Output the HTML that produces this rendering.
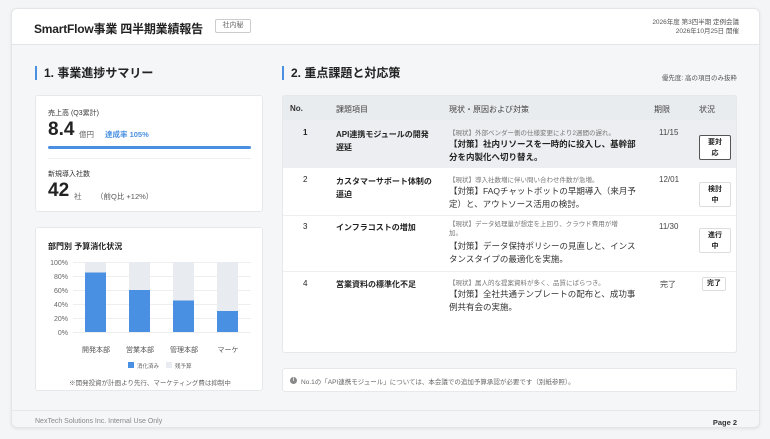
<!DOCTYPE html>
<html><head><meta charset="utf-8"><style>
*{box-sizing:border-box;margin:0;padding:0}
body{width:770px;height:439px;background:#f4f5f7;font-family:"Liberation Sans","Noto Sans CJK JP",sans-serif;color:#222;position:relative;overflow:hidden}
.abs{position:absolute}
.frame{left:11px;top:8px;width:749px;height:420px;background:#f5f6f8;border:1px solid #e3e5e8;border-radius:6px;box-shadow:0 1px 3px rgba(0,0,0,.08);overflow:hidden}
.hdr{left:0;top:0;width:749px;height:36px;background:#fff;border-bottom:1px solid #e3e5e8}
.card{background:#fff;border:1px solid #e6e8eb;border-radius:3px}
.sec{font-size:12px;font-weight:bold;border-left:2px solid #4a90e2;padding-left:7px;line-height:14px}
.td{position:absolute;font-size:8px}
.badge{position:absolute;border:1px solid #ccc;border-radius:2px;background:#fff;font-size:7px;font-weight:bold;text-align:center;line-height:11px}
</style></head><body>
<div class="abs frame">
 <div class="abs hdr">
  <div class="abs" style="left:22px;top:11px;font-size:12px;font-weight:bold;letter-spacing:-0.2px">SmartFlow事業 四半期業績報告</div>
  <div class="abs" style="left:203px;top:10px;width:36px;height:14px;border:1px solid #ccc;border-radius:2px;font-size:7px;color:#666;text-align:center;line-height:12px">社内秘</div>
  <div class="abs" style="right:22px;top:9px;font-size:6.5px;color:#555;text-align:right;line-height:9px">2026年度 第3四半期 定例会議<br>2026年10月25日 開催</div>
 </div>
 <div class="abs sec" style="left:23px;top:57px">1. 事業進捗サマリー</div>
 <div class="abs sec" style="left:270px;top:57px">2. 重点課題と対応策</div>
 <div class="abs" style="right:22px;top:63px;font-size:6.5px;color:#555">優先度: 高の項目のみ抜粋</div>

 <div class="abs card" style="left:23px;top:86px;width:228px;height:117px">
  <div class="abs" style="left:12px;top:12px;font-size:7px;color:#333">売上高 (Q3累計)</div>
  <div class="abs" style="left:12px;top:23px;font-size:19px;font-weight:bold">8.4</div>
  <div class="abs" style="left:43px;top:33px;font-size:7.5px;color:#666">億円</div>
  <div class="abs" style="left:69px;top:33px;font-size:7.5px;color:#4a90e2;font-weight:bold">達成率 105%</div>
  <div class="abs" style="left:12px;top:50px;width:203px;height:3px;background:#4a90e2;border-radius:2px"></div>
  <div class="abs" style="left:12px;top:62px;width:203px;height:1px;background:#eee"></div>
  <div class="abs" style="left:12px;top:73px;font-size:7px;color:#333">新規導入社数</div>
  <div class="abs" style="left:12px;top:84px;font-size:19px;font-weight:bold">42</div>
  <div class="abs" style="left:38px;top:95px;font-size:7.5px;color:#666">社</div>
  <div class="abs" style="left:60px;top:95px;font-size:7.5px;color:#555">（前Q比 +12%）</div>
 </div>

 <div class="abs card" style="left:23px;top:218px;width:228px;height:164px">
  <div class="abs" style="left:12px;top:13px;font-size:8px;font-weight:bold">部門別 予算消化状況</div>
  <svg class="abs" style="left:0;top:0" width="228" height="164">
   <g font-size="7" fill="#666" text-anchor="end" font-family="Liberation Sans, sans-serif">
    <text x="32" y="37">100%</text><text x="32" y="51">80%</text><text x="32" y="65">60%</text><text x="32" y="79">40%</text><text x="32" y="93">20%</text><text x="32" y="107">0%</text>
   </g>
   <g stroke="#eee" stroke-width="1"><line x1="37" y1="34.5" x2="215" y2="34.5"/><line x1="37" y1="48.5" x2="215" y2="48.5"/><line x1="37" y1="62.5" x2="215" y2="62.5"/><line x1="37" y1="76.5" x2="215" y2="76.5"/><line x1="37" y1="90.5" x2="215" y2="90.5"/><line x1="37" y1="104.5" x2="215" y2="104.5"/></g>
   <g fill="#e8ebef"><rect x="49" y="34" width="21" height="70"/><rect x="93" y="34" width="21" height="70"/><rect x="137" y="34" width="21" height="70"/><rect x="181" y="34" width="21" height="70"/></g>
   <g fill="#4a90e2"><rect x="49" y="44.5" width="21" height="59.5"/><rect x="93" y="62" width="21" height="42"/><rect x="137" y="72.5" width="21" height="31.5"/><rect x="181" y="83" width="21" height="21"/></g>
   <g font-size="7" fill="#555" text-anchor="middle" font-family="Liberation Sans, Noto Sans CJK JP, sans-serif">
    <text x="60" y="124">開発本部</text><text x="104" y="124">営業本部</text><text x="148" y="124">管理本部</text><text x="192" y="124">マーケ</text>
   </g>
   <rect x="92" y="134" width="6" height="6" fill="#4a90e2"/><text x="101" y="140" font-size="5.5" fill="#666">消化済み</text>
   <rect x="130" y="134" width="6" height="6" fill="#e8ebef"/><text x="139" y="140" font-size="5.5" fill="#666">残予算</text>
   <text x="114" y="157" font-size="6.5" fill="#666" text-anchor="middle" font-family="Liberation Sans, Noto Sans CJK JP, sans-serif">※開発投資が計画より先行、マーケティング費は抑制中</text>
  </svg>
 </div>

 <div class="abs card" style="left:270px;top:86px;width:455px;height:258px;overflow:hidden">
  <div class="abs" style="left:0;top:0;width:455px;height:24px;background:#e9ecef"></div>
  <div class="abs" style="left:0;top:24px;width:455px;height:48px;background:#eceef1"></div>
  <div class="abs" style="left:0;top:119px;width:455px;height:1px;background:#eee"></div>
  <div class="abs" style="left:0;top:175px;width:455px;height:1px;background:#eee"></div>
  <div class="td" style="left:7px;top:8px;font-weight:bold;color:#333">No.</div>
  <div class="td" style="left:53px;top:8px;color:#444">課題項目</div>
  <div class="td" style="left:166px;top:8px;color:#444">現状・原因および対策</div>
  <div class="td" style="left:371px;top:8px;color:#444">期限</div>
  <div class="td" style="left:416px;top:8px;color:#444">状況</div>

  <div class="td" style="left:20px;top:32px;font-weight:bold">1</div>
  <div class="td" style="left:53px;top:32px;font-weight:bold;width:100px;line-height:13px">API連携モジュールの開発遅延</div>
  <div class="td" style="left:166px;top:31px;font-size:6.5px;color:#777">【現状】外部ベンダー側の仕様変更により2週間の遅れ。</div>
  <div class="td" style="left:166px;top:42px;width:188px;font-size:8.5px;font-weight:bold;line-height:13px">【対策】社内リソースを一時的に投入し、基幹部分を内製化へ切り替え。</div>
  <div class="td" style="left:376px;top:32px;color:#444">11/15</div>
  <div class="badge" style="left:416px;top:39px;width:32px;height:25px;border-color:#555;padding-top:1px">要対<br>応</div>

  <div class="td" style="left:20px;top:79px">2</div>
  <div class="td" style="left:53px;top:79px;font-weight:bold;width:100px;line-height:13px">カスタマーサポート体制の逼迫</div>
  <div class="td" style="left:166px;top:78px;font-size:6.5px;color:#777">【現状】導入社数増に伴い問い合わせ件数が急増。</div>
  <div class="td" style="left:166px;top:89px;width:188px;font-size:8.5px;line-height:13px;color:#333">【対策】FAQチャットボットの早期導入（来月予定）と、アウトソース活用の検討。</div>
  <div class="td" style="left:376px;top:79px;color:#444">12/01</div>
  <div class="badge" style="left:416px;top:86px;width:32px;height:25px;border-color:#ddd;padding-top:1px">検討<br>中</div>

  <div class="td" style="left:20px;top:126px">3</div>
  <div class="td" style="left:53px;top:126px;font-weight:bold">インフラコストの増加</div>
  <div class="td" style="left:166px;top:124px;width:185px;font-size:6.5px;color:#777;line-height:9px">【現状】データ処理量が想定を上回り、クラウド費用が増<br>加。</div>
  <div class="td" style="left:166px;top:144px;width:188px;font-size:8.5px;line-height:13px;color:#333">【対策】データ保持ポリシーの見直しと、インスタンスタイプの最適化を実施。</div>
  <div class="td" style="left:376px;top:126px;color:#444">11/30</div>
  <div class="badge" style="left:416px;top:132px;width:32px;height:25px;border-color:#ddd;padding-top:1px">進行<br>中</div>

  <div class="td" style="left:20px;top:183px">4</div>
  <div class="td" style="left:53px;top:183px;font-weight:bold">営業資料の標準化不足</div>
  <div class="td" style="left:166px;top:181px;font-size:6.5px;color:#777">【現状】属人的な提案資料が多く、品質にばらつき。</div>
  <div class="td" style="left:166px;top:192px;width:188px;font-size:8.5px;line-height:13px;color:#333">【対策】全社共通テンプレートの配布と、成功事例共有会の実施。</div>
  <div class="td" style="left:377px;top:183px;color:#444">完了</div>
  <div class="badge" style="left:419px;top:181px;width:24px;height:14px;border-color:#ddd;line-height:12px">完了</div>
 </div>

 <div class="abs card" style="left:270px;top:359px;width:455px;height:24px">
  <div class="abs" style="left:7px;top:8px;width:7px;height:7px;border-radius:50%;background:#888;color:#fff;font-size:5px;text-align:center;line-height:7px;font-weight:bold">i</div>
  <div class="abs" style="left:18px;top:7px;font-size:6.5px;color:#666">No.1の「API連携モジュール」については、本会議での追加予算承認が必要です（別紙参照）。</div>
 </div>

 <div class="abs" style="left:0;top:401px;width:749px;height:1px;background:#e6e8eb"></div>
 <div class="abs" style="left:23px;top:409px;font-size:7px;color:#888">NexTech Solutions Inc. Internal Use Only</div>
 <div class="abs" style="right:22px;top:409px;font-size:7.5px;font-weight:bold;color:#333">Page 2</div>
</div>
</body></html>
